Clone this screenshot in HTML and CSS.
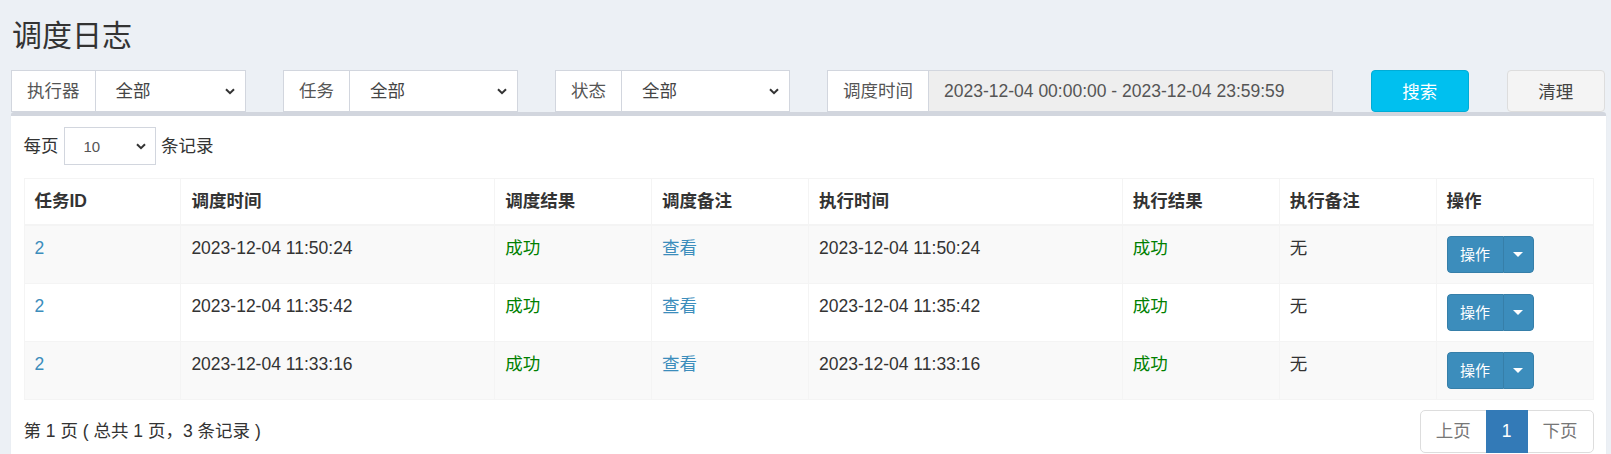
FILE: index.html
```html
<!DOCTYPE html>
<html lang="zh-CN">
<head>
<meta charset="utf-8">
<title>调度日志</title>
<link rel="stylesheet" href="styles.css">
</head>
<body>
<div class="page">
  <h1 class="title">调度日志</h1>
  <div class="filters">
    <div class="group g2">
      <span class="addon">执行器</span>
      <div class="select"><span>全部</span><svg class="chev" width="10" height="7" viewBox="0 0 10 7"><polyline points="1,1.2 5,5.2 9,1.2" fill="none" stroke="#333" stroke-width="2"/></svg></div>
    </div>
    <div class="group g2">
      <span class="addon">任务</span>
      <div class="select"><span>全部</span><svg class="chev" width="10" height="7" viewBox="0 0 10 7"><polyline points="1,1.2 5,5.2 9,1.2" fill="none" stroke="#333" stroke-width="2"/></svg></div>
    </div>
    <div class="group g2">
      <span class="addon">状态</span>
      <div class="select"><span>全部</span><svg class="chev" width="10" height="7" viewBox="0 0 10 7"><polyline points="1,1.2 5,5.2 9,1.2" fill="none" stroke="#333" stroke-width="2"/></svg></div>
    </div>
    <div class="group g4">
      <span class="addon">调度时间</span>
      <div class="input readonly">2023-12-04 00:00:00 - 2023-12-04 23:59:59</div>
    </div>
    <button class="btn btn-info">搜索</button>
    <button class="btn btn-default">清理</button>
  </div>

  <div class="box">
    <div class="length">
      <span>每页</span>
      <div class="select sm"><span>10</span><svg class="chev" width="10" height="7" viewBox="0 0 10 7"><polyline points="1,1.2 5,5.2 9,1.2" fill="none" stroke="#333" stroke-width="2"/></svg></div>
      <span>条记录</span>
    </div>

    <table class="grid">
      <colgroup>
        <col class="c10"><col class="c20"><col class="c10"><col class="c10"><col class="c20"><col class="c10"><col class="c10"><col class="c10">
      </colgroup>
      <thead>
        <tr><th>任务ID</th><th>调度时间</th><th>调度结果</th><th>调度备注</th><th>执行时间</th><th>执行结果</th><th>执行备注</th><th>操作</th></tr>
      </thead>
      <tbody>
        <tr class="odd">
          <td><a class="link">2</a></td><td>2023-12-04 11:50:24</td><td class="ok">成功</td><td><a class="link">查看</a></td><td>2023-12-04 11:50:24</td><td class="ok">成功</td><td>无</td>
          <td><div class="split"><span class="main">操作</span><span class="caret-btn"><i class="caret"></i></span></div></td>
        </tr>
        <tr>
          <td><a class="link">2</a></td><td>2023-12-04 11:35:42</td><td class="ok">成功</td><td><a class="link">查看</a></td><td>2023-12-04 11:35:42</td><td class="ok">成功</td><td>无</td>
          <td><div class="split"><span class="main">操作</span><span class="caret-btn"><i class="caret"></i></span></div></td>
        </tr>
        <tr class="odd">
          <td><a class="link">2</a></td><td>2023-12-04 11:33:16</td><td class="ok">成功</td><td><a class="link">查看</a></td><td>2023-12-04 11:33:16</td><td class="ok">成功</td><td>无</td>
          <td><div class="split"><span class="main">操作</span><span class="caret-btn"><i class="caret"></i></span></div></td>
        </tr>
      </tbody>
    </table>

    <div class="footer">
      <div class="info">第 1 页 ( 总共 1 页，3 条记录 )</div>
      <ul class="pagination">
        <li class="disabled"><span>上页</span></li>
        <li class="active"><span>1</span></li>
        <li class="disabled"><span>下页</span></li>
      </ul>
    </div>
  </div>
</div>
</body>
</html>
```

FILE: styles.css
```css
* { box-sizing: border-box; }
html, body { margin: 0; padding: 0; }
body {
  background: #ecf0f5;
  font-family: "Liberation Sans", "Noto Sans CJK SC", sans-serif;
  font-size: 17.5px;
  line-height: 25px;
  color: #333;
  overflow: hidden;
}
.page {
  padding: 18.75px 5px 0 11px;
}
.title {
  margin: 0 0 0 1px;
  font-size: 30px;
  line-height: 33px;
  font-weight: 400;
  color: #333;
}
.filters {
  display: flex;
  gap: 37.5px;
  margin-top: 18px;
  height: 42.5px;
}
.group {
  display: flex;
  height: 42.5px;
}
.g2 { width: 234.5px; }
.g4 { width: 506px; }
.addon {
  flex: none;
  display: flex;
  align-items: center;
  padding: 0 15px;
  background: #fff;
  border: 1px solid #d2d6de;
  border-right: 0;
  color: #555;
}
.select {
  flex: 1;
  display: flex;
  align-items: center;
  justify-content: space-between;
  padding: 0 10px 0 20px;
  background: #fff;
  border: 1px solid #d2d6de;
  color: #444;
}
.chev { display: block; }
.input {
  flex: 1;
  display: flex;
  align-items: center;
  padding: 0 15px;
  border: 1px solid #d2d6de;
  color: #555;
}
.readonly { background: #eee; }
.btn {
  width: 98.5px;
  height: 42px;
  flex: none;
  border-radius: 4px;
  font-family: inherit;
  font-size: 17.5px;
  padding: 0;
  cursor: pointer;
}
.btn-info { background: #00c0ef; border: 1px solid #00acd6; color: #fff; }
.btn-default { background: #f4f4f4; border: 1px solid #ddd; color: #444; }

.box {
  margin-top: 0;
  background: #fff;
  border-top: 4px solid #d2d6de;
  border-radius: 3px;
  box-shadow: 0 1px 1px rgba(0,0,0,0.1);
  padding: 11px 12.5px 40px;
  height: 400px;
}
.length {
  display: flex;
  align-items: center;
  gap: 5px;
  height: 37.5px;
}
.length > span:first-child { margin-right: 0; }
.select.sm {
  flex: none;
  width: 92.5px;
  height: 37.5px;
  padding: 0 9px 0 19px;
  font-size: 15px;
  color: #555;
  border-color: #d2d6de;
}
.grid {
  width: 100%;
  table-layout: fixed;
  border-collapse: collapse;
  margin-top: 13.5px;
  border: 1px solid #f4f4f4;
}
.c10 { width: 10%; }
.c20 { width: 20%; }
.grid th, .grid td {
  border: 1px solid #f4f4f4;
  padding: 10px;
  text-align: left;
  vertical-align: top;
  line-height: 25px;
}
.grid th {
  font-weight: 700;
  color: #333;
  border-bottom: 2.5px solid #f4f4f4;
}
.grid tr.odd td { background: #f9f9f9; }
.link { color: #3c8dbc; text-decoration: none; }
.ok { color: green; }

.split {
  display: inline-flex;
  height: 37px;
  border-radius: 4px;
  overflow: hidden;
  color: #fff;
  font-size: 15px;
}
.split .main {
  display: flex;
  align-items: center;
  padding: 0 12.5px;
  background: #3c8dbc;
  border: 1px solid #367fa9;
  border-right: 0;
  border-radius: 4px 0 0 4px;
}
.split .caret-btn {
  display: flex;
  align-items: center;
  justify-content: center;
  width: 31px;
  background: #3c8dbc;
  border: 1px solid #367fa9;
  border-radius: 0 4px 4px 0;
}
.caret {
  display: block;
  width: 0;
  height: 0;
  border-top: 5px solid #fff;
  border-left: 5px solid transparent;
  border-right: 5px solid transparent;
}

.footer {
  display: flex;
  justify-content: space-between;
  align-items: center;
  margin-top: 10px;
}
.info { color: #333; padding-left: 0; }
.pagination {
  display: flex;
  list-style: none;
  margin: 0;
  padding: 0;
}
.pagination li span {
  display: block;
  height: 42.5px;
  padding: 7.5px 15px;
  border: 1px solid #ddd;
  margin-left: -1px;
  background: #fff;
  color: #777;
  line-height: 25px;
}
.pagination li:first-child span { border-radius: 5px 0 0 5px; margin-left: 0; }
.pagination li:last-child span { border-radius: 0 5px 5px 0; }
.pagination li.active span {
  background: #337ab7;
  border-color: #337ab7;
  color: #fff;
  position: relative;
  z-index: 1;
}
```
